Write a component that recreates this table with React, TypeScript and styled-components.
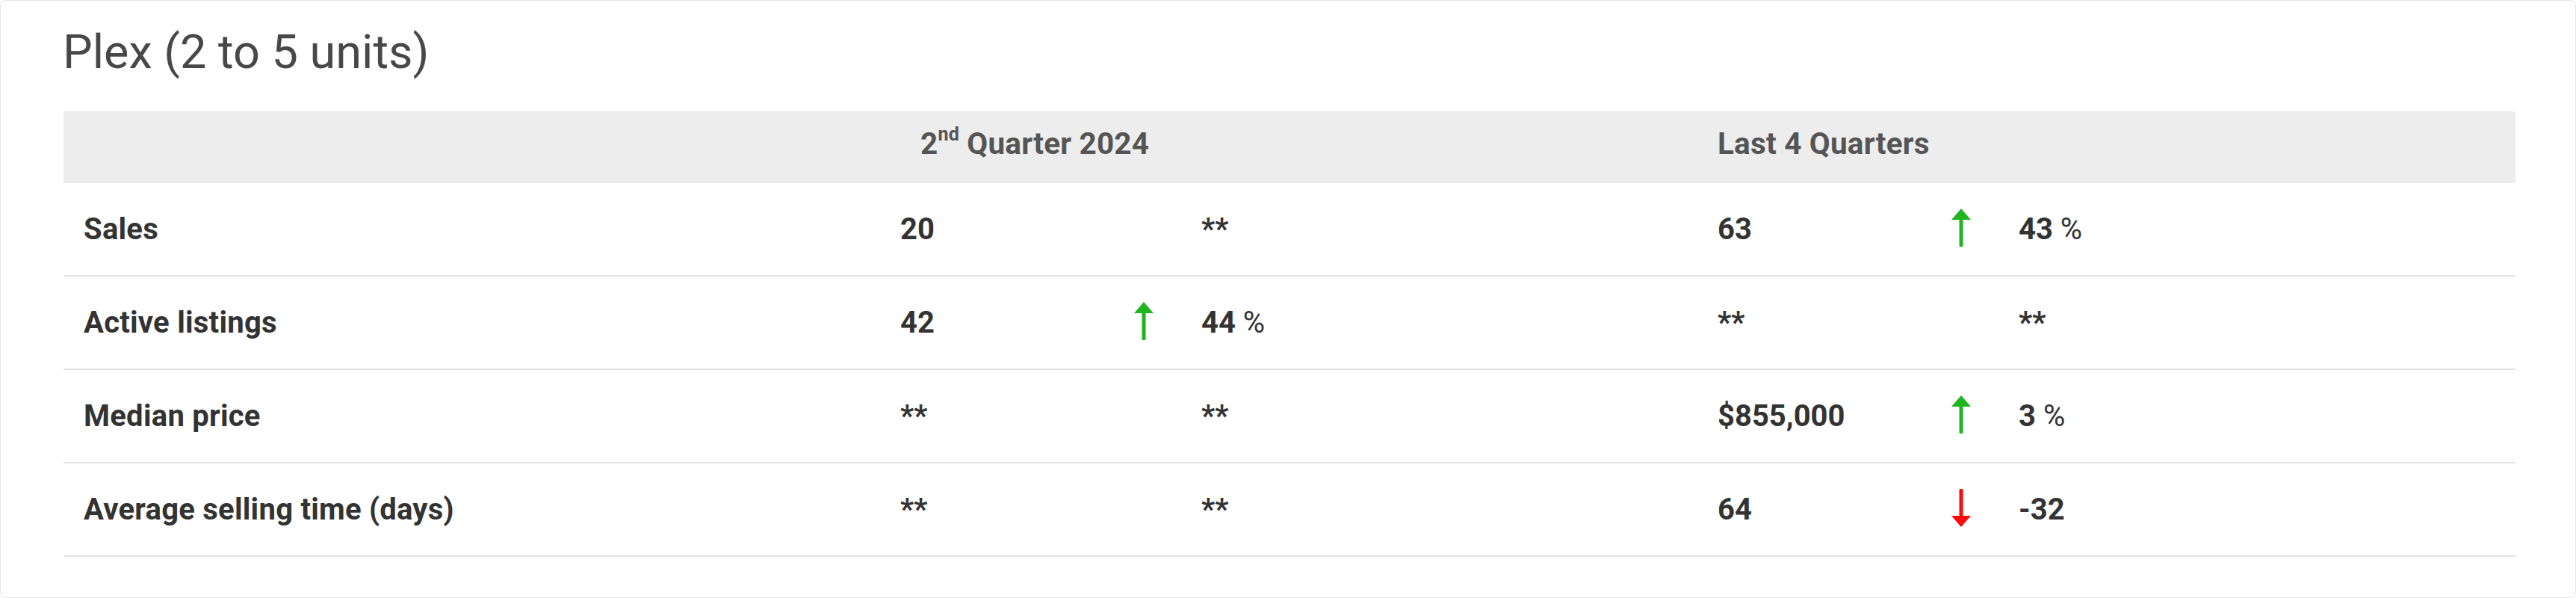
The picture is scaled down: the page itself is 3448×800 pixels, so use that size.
import React, { Fragment } from 'react'
import styled, { createGlobalStyle } from 'styled-components'

const GlobalStyle = createGlobalStyle`
  html, body {
    margin: 0;
    padding: 0;
    background: #ffffff;
  }
  body {
    font-family: Roboto, 'Liberation Sans', Arial, sans-serif;
  }
`

// label | value | arrow | change  (twice: quarter, last 4 quarters)
const COLUMNS = '1093px 313px 90px 691px 313px 90px 1fr'

type Trend = 'up' | 'down'

interface Metric {
  value: string
  trend?: Trend
  change: string
  unit?: string
}

interface StatRow {
  label: string
  quarter: Metric
  year: Metric
}

const STATS: StatRow[] = [
  {
    label: 'Sales',
    quarter: { value: '20', change: '**' },
    year: { value: '63', trend: 'up', change: '43', unit: '%' },
  },
  {
    label: 'Active listings',
    quarter: { value: '42', trend: 'up', change: '44', unit: '%' },
    year: { value: '**', change: '**' },
  },
  {
    label: 'Median price',
    quarter: { value: '**', change: '**' },
    year: { value: '$855,000', trend: 'up', change: '3', unit: '%' },
  },
  {
    label: 'Average selling time (days)',
    quarter: { value: '**', change: '**' },
    year: { value: '64', trend: 'down', change: '-32' },
  },
]

const TrendArrow = ({ trend }: { trend: Trend }) =>
  trend === 'up' ? (
    <svg width="26" height="51" viewBox="0 0 26 51">
      <polygon points="13,0 26,15 0,15" fill="#1fb51f" />
      <rect x="10.5" y="13" width="5" height="38" rx="1.5" fill="#1fb51f" />
    </svg>
  ) : (
    <svg width="26" height="51" viewBox="0 0 26 51">
      <rect x="10.5" y="0" width="5" height="38" rx="1.5" fill="#ff0a0a" />
      <polygon points="0,36 26,36 13,51" fill="#ff0a0a" />
    </svg>
  )

const MetricCells = ({ metric }: { metric: Metric }) => (
  <Fragment>
    <ValueCell>{metric.value}</ValueCell>
    <ArrowCell>{metric.trend && <TrendArrow trend={metric.trend} />}</ArrowCell>
    <ValueCell>
      {metric.change}
      {metric.unit && <Unit> {metric.unit}</Unit>}
    </ValueCell>
  </Fragment>
)

const App = () => (
  <Fragment>
    <GlobalStyle />
    <Card>
      <Title>Plex (2 to 5 units)</Title>
      <Table>
        <HeaderRow>
          <span />
          <HeaderCell $span={3} $indent={54}>
            2<sup>nd</sup> Quarter 2024
          </HeaderCell>
          <HeaderCell $span={3} $indent={27}>
            Last 4 Quarters
          </HeaderCell>
        </HeaderRow>
        {STATS.map((row) => (
          <BodyRow key={row.label}>
            <LabelCell>{row.label}</LabelCell>
            <MetricCells metric={row.quarter} />
            <MetricCells metric={row.year} />
          </BodyRow>
        ))}
      </Table>
    </Card>
  </Fragment>
)

const Card = styled.section`
  box-sizing: border-box;
  width: 100%;
  height: 800px;
  padding: 37px 80px 0 84px;
  background: #ffffff;
  border: 1px solid #e4e4e4;
  border-radius: 8px;
`

const Title = styled.h2`
  margin: 0 0 48px -1px;
  font-size: 63px;
  line-height: 63px;
  font-weight: 400;
  color: #484848;
`

const Table = styled.div`
  display: flex;
  flex-direction: column;
`

const RowBase = styled.div`
  display: grid;
  grid-template-columns: ${COLUMNS};
  align-items: center;
`

const HeaderRow = styled(RowBase)`
  height: 96px;
  padding-bottom: 10px;
  box-sizing: border-box;
  background: #ededed;
`

const HeaderCell = styled.div<{ $span: number; $indent: number }>`
  grid-column: span ${(p) => p.$span};
  padding-left: ${(p) => p.$indent}px;
  font-size: 40.5px;
  line-height: 1;
  font-weight: 700;
  letter-spacing: 0.2px;
  color: #555555;

  sup {
    font-size: 0.62em;
    vertical-align: 0.7em;
    line-height: 0;
  }
`

const BodyRow = styled(RowBase)`
  height: 125px;
  box-sizing: border-box;
  border-bottom: 2px solid #e2e2e2;
`

const Cell = styled.div`
  padding-left: 27px;
  font-size: 40px;
  line-height: 1;
  font-weight: 700;
  color: #333333;
  white-space: nowrap;
`

const LabelCell = styled(Cell)`
  letter-spacing: 0.25px;
`

const ValueCell = styled(Cell)``

const ArrowCell = styled.div`
  display: flex;
  align-items: center;
  height: 51px;
  margin-top: -5px;
  padding-left: 27px;
`

const Unit = styled.span`
  font-weight: 400;
`

export default App
